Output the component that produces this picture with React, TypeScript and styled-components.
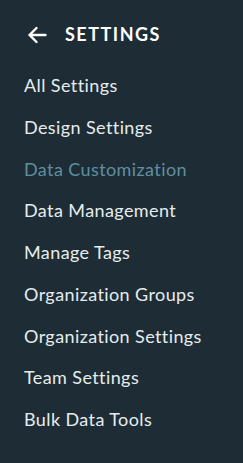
import styled, { createGlobalStyle } from "styled-components";

const GlobalStyle = createGlobalStyle`
  html, body {
    margin: 0;
    padding: 0;
    background: #1e2c35;
  }
`;

const items = [
  "All Settings",
  "Design Settings",
  "Data Customization",
  "Data Management",
  "Manage Tags",
  "Organization Groups",
  "Organization Settings",
  "Team Settings",
  "Bulk Data Tools",
];

const ACTIVE = "Data Customization";

export default function App() {
  return (
    <>
      <GlobalStyle />
      <Sidebar>
        <Header>
          <BackButton aria-label="Back">
            <svg width="20" height="18" viewBox="0 0 20 18" fill="none">
              <path
                d="M18.5 9H2.5M9.5 2L2.5 9l7 7"
                stroke="#ffffff"
                strokeWidth="2.4"
                strokeLinecap="round"
                strokeLinejoin="round"
              />
            </svg>
          </BackButton>
          <Title>SETTINGS</Title>
        </Header>
        <Menu>
          {items.map((item) => (
            <MenuItem key={item} $active={item === ACTIVE}>
              {item}
            </MenuItem>
          ))}
        </Menu>
      </Sidebar>
    </>
  );
}

const Sidebar = styled.nav`
  width: 243px;
  height: 463px;
  background: #1e2c35;
  font-family: Lato, "Open Sans", sans-serif;
  box-sizing: border-box;
  padding-top: 22px;
`;

const Header = styled.div`
  display: flex;
  align-items: center;
  height: 24px;
  padding-left: 27px;
  gap: 18px;
`;

const BackButton = styled.button`
  display: flex;
  align-items: center;
  background: none;
  border: none;
  padding: 0;
  margin-top: 2px;
  cursor: pointer;
`;

const Title = styled.h1`
  margin: 0;
  font-size: 18px;
  line-height: 24px;
  font-weight: 700;
  letter-spacing: 1.5px;
  color: #ffffff;
`;

const Menu = styled.ul`
  list-style: none;
  margin: 19px 0 0;
  padding: 0 0 0 24px;
  display: flex;
  flex-direction: column;
`;

const MenuItem = styled.li<{ $active?: boolean }>`
  height: 41.75px;
  line-height: 41.75px;
  font-size: 18px;
  letter-spacing: 0.4px;
  font-variant-ligatures: none;
  color: ${(p) => (p.$active ? "#5f8fa0" : "#e6ecee")};
  cursor: pointer;
`;
